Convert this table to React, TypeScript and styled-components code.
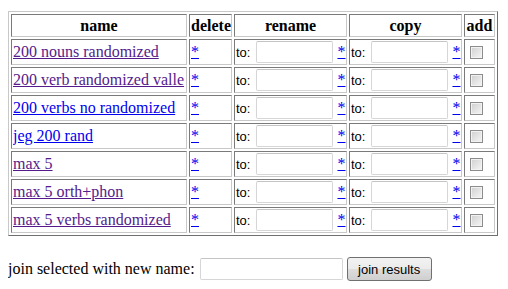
import React from "react"
import styled, { createGlobalStyle } from "styled-components"

const GlobalStyle = createGlobalStyle`
  body {
    margin: 8px;
    background: #ffffff;
    color: #000000;
    font-family: "Liberation Serif", "Times New Roman", serif;
    font-size: 16px;
  }
`

const Page = styled.div`
  padding-top: 3px;
`

const Table = styled.table`
  table-layout: fixed;
  width: 490px;
  border-collapse: separate;
  border-spacing: 2px;
  border: 1px solid;
  border-color: #c8c8c8 #6f6f6f #6f6f6f #c8c8c8;
`

const HeadCell = styled.th<{ $w: number }>`
  box-sizing: border-box;
  width: ${props => props.$w}px;
  padding: 1px;
  border: 1px solid;
  border-color: #7a7a7a #c8c8c8 #c8c8c8 #7a7a7a;
  font-weight: bold;
  text-align: center;
  white-space: nowrap;
  line-height: 19px;
`

const Cell = styled.td`
  box-sizing: border-box;
  height: 26px;
  padding: 1px;
  border: 1px solid;
  border-color: #7a7a7a #c8c8c8 #c8c8c8 #7a7a7a;
  vertical-align: middle;
  white-space: nowrap;
`

const NameClip = styled.div`
  width: 172px;
  overflow: hidden;
  white-space: nowrap;
`

const NameLink = styled.a<{ $visited?: boolean }>`
  color: ${props => (props.$visited ? "#551a8b" : "#0000ee")};
  text-decoration: underline;
`

const StarLink = styled.a`
  color: #0000ee;
  text-decoration: underline;
  line-height: 18px;
`

const Field = styled.div`
  display: flex;
  align-items: center;
`

const ToLabel = styled.span`
  font-family: "Liberation Sans", Arial, sans-serif;
  font-size: 13px;
  margin-right: 6px;
`

const TextBox = styled.input`
  box-sizing: border-box;
  width: 77px;
  height: 22px;
  margin: 0 4px 0 0;
  padding: 1px 2px;
  border: 1px solid #d6d6d6;
  border-top-color: #c4c4c4;
  border-radius: 2px;
  background: #ffffff;
  font-family: "Liberation Sans", Arial, sans-serif;
  font-size: 13px;
`

const Check = styled.input`
  appearance: none;
  box-sizing: border-box;
  display: block;
  width: 13px;
  height: 13px;
  margin: 0 0 0 4px;
  border: 1px solid #8c8c8c;
  background: linear-gradient(135deg, #cfcfcf, #f6f6f6);
  box-shadow: inset 0 0 0 1px #f2f2f2;
`

const JoinRow = styled.div`
  display: flex;
  align-items: center;
  margin-top: 21px;
`

const JoinLabel = styled.span`
  margin-right: 5px;
`

const JoinInput = styled.input`
  box-sizing: border-box;
  width: 143px;
  height: 22px;
  margin: 0 4px 0 0;
  padding: 1px 2px;
  border: 1px solid #d6d6d6;
  border-top-color: #c4c4c4;
  border-radius: 2px;
  background: #ffffff;
`

const JoinButton = styled.button`
  box-sizing: border-box;
  width: 85px;
  height: 24px;
  padding: 0 6px;
  border: 1px solid #707070;
  border-radius: 3px;
  background: linear-gradient(#f2f2f2 0%, #ebebeb 50%, #dddddd 51%, #cfcfcf 100%);
  font-family: "Liberation Sans", Arial, sans-serif;
  font-size: 13px;
  color: #000000;
`

const lists = [
  { name: "200 nouns randomized", visited: true },
  { name: "200 verb randomized valle", visited: true },
  { name: "200 verbs no randomized", visited: false },
  { name: "jeg 200 rand", visited: false },
  { name: "max 5", visited: true },
  { name: "max 5 orth+phon", visited: true },
  { name: "max 5 verbs randomized", visited: true },
]

const App = () => (
  <Page>
    <GlobalStyle />
    <Table>
      <thead>
        <tr>
          <HeadCell $w={176}>name</HeadCell>
          <HeadCell $w={43}>delete</HeadCell>
          <HeadCell $w={113}>rename</HeadCell>
          <HeadCell $w={113}>copy</HeadCell>
          <HeadCell $w={31}>add</HeadCell>
        </tr>
      </thead>
      <tbody>
        {lists.map(list => (
          <tr key={list.name}>
            <Cell>
              <NameClip>
                <NameLink href="#" $visited={list.visited}>{list.name}</NameLink>
              </NameClip>
            </Cell>
            <Cell>
              <StarLink href="#">*</StarLink>
            </Cell>
            <Cell>
              <Field>
                <ToLabel>to:</ToLabel>
                <TextBox type="text" />
                <StarLink href="#">*</StarLink>
              </Field>
            </Cell>
            <Cell>
              <Field>
                <ToLabel>to:</ToLabel>
                <TextBox type="text" />
                <StarLink href="#">*</StarLink>
              </Field>
            </Cell>
            <Cell>
              <Check type="checkbox" />
            </Cell>
          </tr>
        ))}
      </tbody>
    </Table>
    <JoinRow>
      <JoinLabel>join selected with new name:</JoinLabel>
      <JoinInput type="text" />
      <JoinButton type="button">join results</JoinButton>
    </JoinRow>
  </Page>
)

export default App
